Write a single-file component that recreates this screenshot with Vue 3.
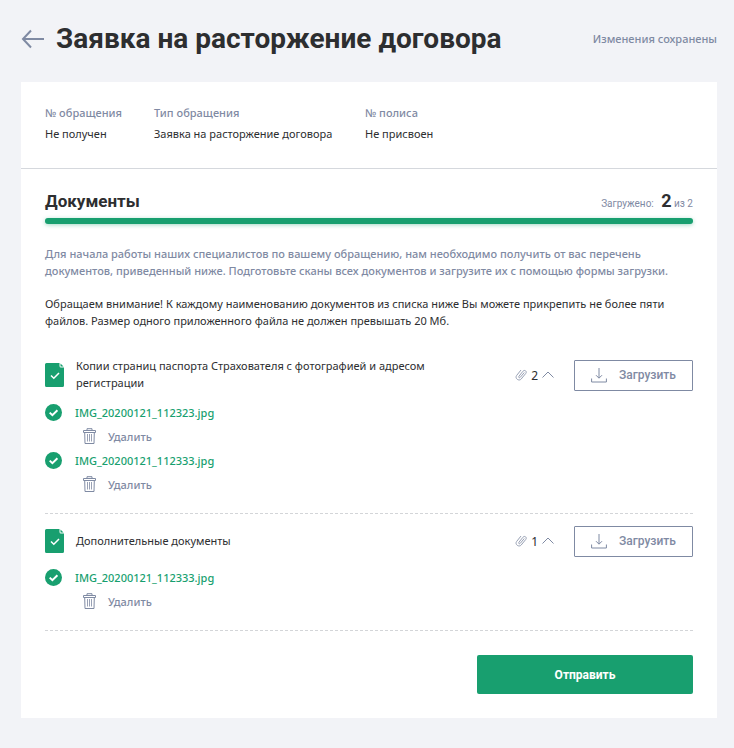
<script setup>
  import { ref } from 'vue';

  const info = [
    { label: '№ обращения', value: 'Не получен' },
    { label: 'Тип обращения', value: 'Заявка на расторжение договора' },
    { label: '№ полиса', value: 'Не присвоен' },
  ];

  const documents = ref([
    {
      id: 1,
      title: 'Копии страниц паспорта Страхователя с фотографией и адресом регистрации',
      opened: true,
      files: ['IMG_20200121_112323.jpg', 'IMG_20200121_112333.jpg'],
    },
    {
      id: 2,
      title: 'Дополнительные документы',
      opened: true,
      files: ['IMG_20200121_112333.jpg'],
    },
  ]);

  function loadedCount() {
    return documents.value.filter(doc => doc.files.length > 0).length;
  }

  function removeFile(doc, idx) {
    doc.files.splice(idx, 1);
  }
</script>


<template>
  <div class="page">
    <header class="header">
      <a href="#" class="back" aria-label="Назад">
        <svg width="24" height="20" viewBox="0 0 24 20">
          <path d="M10 1.5L2 10l8 8.500M2 10h21" />
        </svg>
      </a>
      <h1 class="title">Заявка на расторжение договора</h1>
      <span class="saved">Изменения сохранены</span>
    </header>

    <main class="card">
      <dl class="info">
        <div v-for="item in info" :key="item.label">
          <dt>{{ item.label }}</dt>
          <dd>{{ item.value }}</dd>
        </div>
      </dl>

      <section class="documents">
        <div class="documents-head">
          <h2>Документы</h2>
          <p class="loaded">Загружено: <b>{{ loadedCount() }}</b> из {{ documents.length }}</p>
        </div>
        <div class="progress">
          <div class="progress-fill" :style="{width: loadedCount() / documents.length * 100 + '%'}"></div>
        </div>

        <p class="text muted">
          Для начала работы наших специалистов по вашему обращению, нам необходимо получить от вас перечень документов, приведенный ниже. Подготовьте сканы всех документов и загрузите их с помощью формы загрузки.
        </p>
        <p class="text">
          Обращаем внимание! К каждому наименованию документов из списка ниже Вы можете прикрепить не более пяти файлов. Размер одного приложенного файла не должен превышать 20 Мб.
        </p>

        <article v-for="doc in documents" :key="doc.id" class="doc">
          <div class="doc-row">
            <svg class="doc-icon" width="19" height="24" viewBox="0 0 19 24">
              <path d="M1.500 0H14.500V3Q14.500 4.500 16 4.500H19V22.500Q19 24 17.500 24H1.500Q0 24 0 22.500V1.500Q0 0 1.500 0Z" fill="#189f6f" />
              <path d="M15.500 0.500L18.500 3.500H15.500Z" fill="#189f6f" />
              <path d="M6 12.500l2.800 2.800L14 10" fill="none" stroke="#fff" stroke-width="1.500" />
            </svg>
            <h3 class="doc-title">{{ doc.title }}</h3>
            <button type="button" class="count" :aria-expanded="doc.opened" @click="doc.opened = !doc.opened">
              <svg class="clip" width="12" height="14" viewBox="0 0 12 14">
                <path d="M9.300 4.500L5.200 9.400C4.400 10.300 3.100 9.300 3.900 8.300L8 3.200C9.600 1.300 12.300 3.400 10.800 5.400L6.200 11C4 13.600-0.500 10.500 1.600 7.500L6 2" />
              </svg>
              <span>{{ doc.files.length }}</span>
              <svg width="12" height="8" viewBox="0 0 12 8" :class="{closed: !doc.opened}">
                <path d="M0.500 6.500L6 1l5.500 5.500" />
              </svg>
            </button>
            <button type="button" class="upload">
              <svg width="16" height="16" viewBox="0 0 16 16">
                <path d="M8 1v10M5 8.200l3 3 3-3M0.600 11.500V15h14.800v-3.500" />
              </svg>
              Загрузить
            </button>
          </div>
          <ul v-if="doc.opened" class="files">
            <li v-for="(file, idx) in doc.files" :key="file">
              <div class="file">
                <svg width="17" height="17" viewBox="0 0 17 17">
                  <circle cx="8.500" cy="8.500" r="8.500" fill="#189f6f" />
                  <path d="M4.700 8.600l2.700 2.600 5-4.900" fill="none" stroke="#fff" stroke-width="2" />
                </svg>
                <a href="#">{{ file }}</a>
              </div>
              <button type="button" class="remove" @click="removeFile(doc, idx)">
                <svg width="13" height="16" viewBox="0 0 13 16">
                  <path d="M0.500 2.500h12M4 2.500V0.700h5v1.800M0.500 4.500h12V2.500M0.500 2.500v2M1.700 4.500l.3 11h9l.3-11" />
                  <path class="bars" d="M4.500 6v7.500M6.500 6v7.500M8.500 6v7.500" />
                </svg>
                Удалить
              </button>
            </li>
          </ul>
        </article>

        <div class="actions">
          <button type="submit" class="submit">Отправить</button>
        </div>
      </section>
    </main>
  </div>
</template>


<style>
body {
  background-color: #f2f3f7;
}
</style>

<style scoped>
.page {
  padding: 0 17px 30px 21px;
  font-family: "Noto Sans", "Open Sans", sans-serif;
  font-size: 11px;
  color: #2d2e30;
}

h1, h2, h3, p, dl, dd, ul {
  margin: 0;
  padding: 0;
}

button {
  font-family: inherit;
  padding: 0;
  border: none;
  background: none;
  cursor: pointer;
}

svg {
  flex-shrink: 0;
}

.header {
  display: flex;
  align-items: center;
  height: 78px;
  padding-bottom: 4px;
}

.back {
  display: flex;
  margin-right: 11px;
}

.back path {
  fill: none;
  stroke: #7f8aa3;
  stroke-width: 2;
}

.title {
  flex: 1;
  font-family: Roboto, sans-serif;
  font-size: 28px;
  line-height: 36px;
  font-weight: 700;
  white-space: nowrap;
}

.saved {
  padding-bottom: 2px;
  color: #7f8aa3;
  font-weight: 500;
}

.card {
  background-color: #fff;
}

.info {
  display: grid;
  grid-template-columns: 109px 211px 1fr;
  padding: 20px 24px 24px;
  border-bottom: 1px solid #d5d8dd;
  line-height: 21px;
}

.info dt {
  color: #7f8aa3;
  font-weight: 500;
}

.documents {
  padding: 20px 24px 24px;
}

.documents-head {
  display: flex;
  justify-content: space-between;
  height: 29px;
  font-family: Roboto, sans-serif;
}

.documents-head h2 {
  font-size: 17px;
  line-height: 24px;
}

.loaded {
  font-size: 10px;
  line-height: 24px;
  color: #7f8aa3;
}

.loaded b {
  margin-left: 5px;
  font-size: 18px;
  color: #2d2e30;
}

.progress {
  margin-bottom: 21px;
  border-radius: 3px;
  background-color: #e6e8ee;
}

.progress-fill {
  height: 6px;
  border-radius: 3px;
  background-color: #189f6f;
  box-shadow: 0 1px 4px rgba(24, 159, 111, 0.4);
}

.text {
  margin-bottom: 18px;
  line-height: 17px;
}

.text.muted {
  margin-bottom: 16px;
  color: #7f8aa3;
  font-weight: 500;
}

.doc {
  padding: 10px 0 17px;
  border-bottom: 1px dashed #d3d5d8;
}

.doc-row {
  display: flex;
  align-items: center;
  min-height: 34px;
  margin-bottom: 7px;
}

.doc-title {
  flex: 1;
  margin: 0 64px 0 12px;
  padding-bottom: 2px;
  font-size: 11px;
  line-height: 17px;
  font-weight: 400;
}

.count {
  display: flex;
  align-items: center;
  gap: 4px;
  margin-right: 20px;
  font-size: 12px;
  color: #2d2e30;
}

.count path,
.upload path,
.remove path {
  fill: none;
  stroke: #7f8aa3;
}

.clip,
.bars {
  opacity: 0.8;
}

.closed {
  transform: rotate(180deg);
}

.upload {
  display: flex;
  align-items: center;
  justify-content: center;
  gap: 12px;
  width: 119px;
  height: 31px;
  border: 1px solid #7f8aa3;
  border-radius: 1px;
  font-family: Roboto, sans-serif;
  font-size: 12px;
  font-weight: 500;
  color: #7f8aa3;
}

.files {
  list-style: none;
}

.file {
  display: flex;
  align-items: center;
  gap: 13px;
  height: 24px;
}

.file a {
  color: #189f6f;
  font-weight: 500;
  text-decoration: none;
}

.remove {
  display: flex;
  align-items: center;
  gap: 12px;
  height: 24px;
  margin-left: 38px;
  font-size: 11px;
  font-weight: 500;
  color: #7f8aa3;
}

.actions {
  display: flex;
  justify-content: flex-end;
  padding-top: 24px;
}

.submit {
  width: 216px;
  height: 39px;
  border-radius: 2px;
  background-color: #189f6f;
  color: #fff;
  font-family: Roboto, sans-serif;
  font-size: 12px;
  font-weight: 700;
}
</style>
